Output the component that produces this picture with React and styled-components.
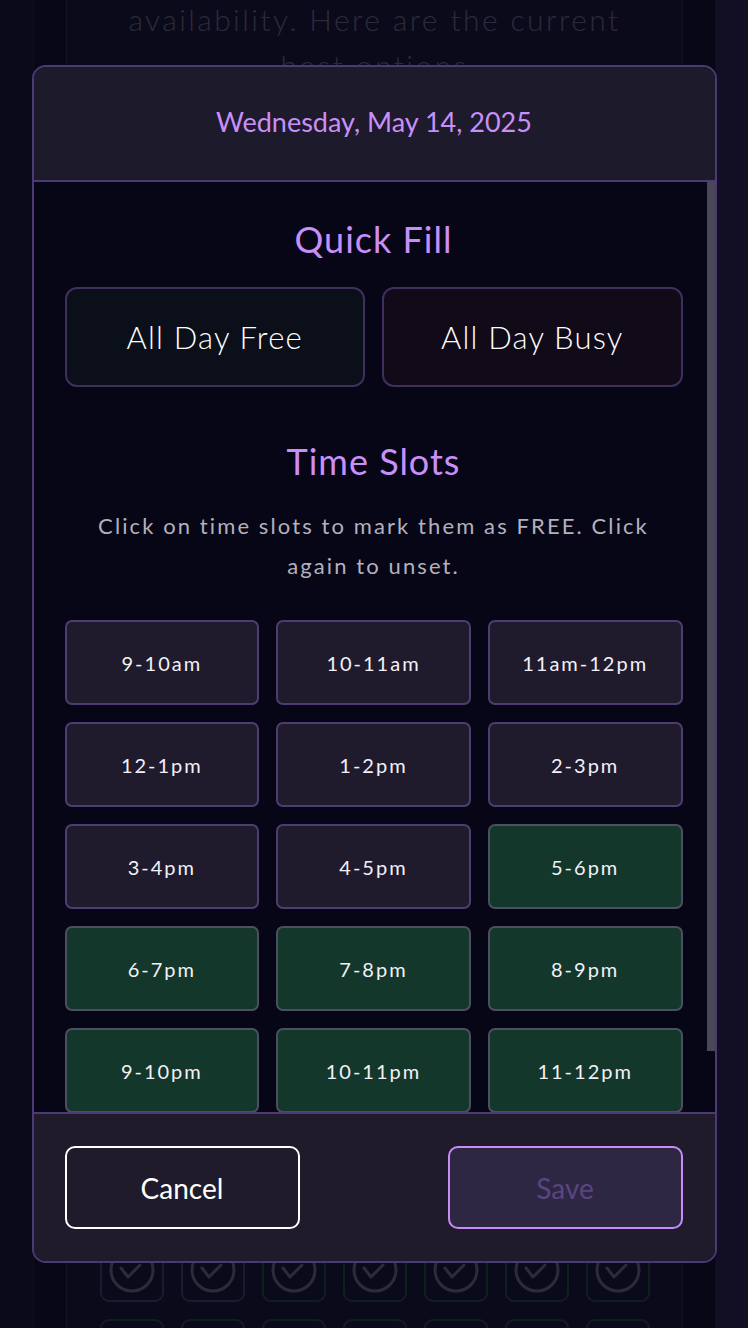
import styled, { createGlobalStyle } from "styled-components"

const GlobalStyle = createGlobalStyle`
    html, body {
        margin: 0;
        padding: 0;
        height: 1328px;
        overflow: hidden;
        background: #0b0a1b;
    }
    * {
        box-sizing: border-box;
    }
    body {
        font-family: Lato, "Open Sans", sans-serif;
    }
`

const slots = [
    { label: "9-10am", free: false },
    { label: "10-11am", free: false },
    { label: "11am-12pm", free: false },
    { label: "12-1pm", free: false },
    { label: "1-2pm", free: false },
    { label: "2-3pm", free: false },
    { label: "3-4pm", free: false },
    { label: "4-5pm", free: false },
    { label: "5-6pm", free: true },
    { label: "6-7pm", free: true },
    { label: "7-8pm", free: true },
    { label: "8-9pm", free: true },
    { label: "9-10pm", free: true },
    { label: "10-11pm", free: true },
    { label: "11-12pm", free: true },
]

// the page behind the modal, only the edges of it show
const backgroundChecks = [false, false, true, true, true, true, true, true, true, true, true, true, true, true, true, true, true, true, true, true, true]

// visible part of the scroll area vs full content height
const viewHeight = 930
const contentHeight = 995

function CheckCircle() {
    return (
        <svg width="48" height="48" viewBox="0 0 48 48" fill="none" stroke="#5a5676" strokeWidth="3" strokeLinecap="round" strokeLinejoin="round">
            <circle cx="24" cy="24" r="21" />
            <polyline points="13,22 20,31 32,19" />
        </svg>
    )
}

export default function App() {
    const thumb = Math.round((viewHeight * viewHeight) / contentHeight)

    return (
        <>
            <GlobalStyle />
            <Page>
                <Column>
                    <Card>
                        <Intro>availability. Here are the current best options</Intro>
                        <CheckGrid>
                            {backgroundChecks.map((free, i) => (
                                <CheckBox key={i} $free={free}>
                                    <CheckCircle />
                                </CheckBox>
                            ))}
                        </CheckGrid>
                    </Card>
                </Column>
            </Page>

            <Overlay>
                <Modal>
                    <Header>
                        <DateTitle>Wednesday, May 14, 2025</DateTitle>
                    </Header>
                    <BodyRow>
                        <Body>
                            <SectionTitle>Quick Fill</SectionTitle>
                            <QuickRow>
                                <QuickButton $tone="free">All Day Free</QuickButton>
                                <QuickButton $tone="busy">All Day Busy</QuickButton>
                            </QuickRow>
                            <SectionTitle $spaced>Time Slots</SectionTitle>
                            <Hint>Click on time slots to mark them as FREE. Click again to unset.</Hint>
                            <SlotGrid>
                                {slots.map((slot) => (
                                    <Slot key={slot.label} $free={slot.free}>{slot.label}</Slot>
                                ))}
                            </SlotGrid>
                        </Body>
                        <ScrollTrack>
                            <ScrollThumb style={{ height: thumb }} />
                        </ScrollTrack>
                    </BodyRow>
                    <Footer>
                        <CancelButton>Cancel</CancelButton>
                        <SaveButton disabled>Save</SaveButton>
                    </Footer>
                </Modal>
            </Overlay>
        </>
    )
}

const Page = styled.div`
    height: 1328px;
    overflow: hidden;
    background: linear-gradient(to right, #161436 0 50%, #241c48 50% 100%);
    padding-left: 33px;
    padding-right: 32px;
`

const Column = styled.div`
    height: 100%;
    background: #100e2c;
    border-left: 1px solid #221f42;
    border-right: 1px solid #221f42;
    padding: 0 32px;
`

const Card = styled.div`
    height: 100%;
    background: #161436;
    border-left: 1px solid #272448;
    border-right: 1px solid #272448;
    display: flex;
    flex-direction: column;
    align-items: center;
`

const Intro = styled.p`
    margin: -4px 0 0;
    width: 515px;
    text-align: center;
    font-size: 30px;
    font-weight: 300;
    line-height: 46px;
    letter-spacing: 2.4px;
    color: #585474;
`

const CheckGrid = styled.div`
    margin-top: 1150px;
    display: grid;
    grid-template-columns: repeat(7, 64px);
    gap: 17px;
`

const CheckBox = styled.div`
    width: 64px;
    height: 64px;
    border: 2px solid ${(p) => (p.$free ? "#1e3e3c" : "#383458")};
    border-radius: 9px;
    display: flex;
    align-items: center;
    justify-content: center;
`

const Overlay = styled.div`
    position: fixed;
    inset: 0;
    background: rgba(0, 0, 0, 0.5);
    display: flex;
    align-items: center;
    justify-content: center;
`

const Modal = styled.div`
    width: 685px;
    height: 1198px;
    background: #070617;
    border: 2px solid #4c3a75;
    border-radius: 14px;
    overflow: hidden;
    display: flex;
    flex-direction: column;
`

const Header = styled.div`
    flex: none;
    height: 115px;
    background: #1d1a2c;
    border-bottom: 2px solid #4c3a75;
    display: flex;
    align-items: center;
    justify-content: center;
    padding-bottom: 4px;
`

const DateTitle = styled.h2`
    margin: 0;
    font-size: 27px;
    font-weight: 400;
    color: #c98ff8;
`

const BodyRow = styled.div`
    flex: 1;
    min-height: 0;
    display: flex;
`

const Body = styled.div`
    flex: 1;
    overflow: hidden;
    padding: 35px 24px 64px 31px;
`

const ScrollTrack = styled.div`
    flex: none;
    width: 8px;
`

const ScrollThumb = styled.div`
    width: 100%;
    background: #4a4757;
`

const SectionTitle = styled.h3`
    margin: ${(p) => (p.$spaced ? "52px 0 0" : "0")};
    text-align: center;
    font-size: 36px;
    line-height: 44px;
    font-weight: 400;
    letter-spacing: 1px;
    color: #c98ff8;
`

const QuickRow = styled.div`
    margin-top: 26px;
    display: grid;
    grid-template-columns: 1fr 1fr;
    gap: 17px;
`

const QuickButton = styled.button`
    height: 100px;
    border-radius: 12px;
    border: 2px solid #3f2f5c;
    background: ${(p) => (p.$tone === "free" ? "#0b0f19" : "#110a19")};
    color: #ffffff;
    font-family: inherit;
    font-size: 31px;
    font-weight: 300;
    letter-spacing: 1.2px;
    cursor: pointer;
`

const Hint = styled.p`
    margin: 23px auto 0;
    max-width: 590px;
    text-align: center;
    font-size: 22px;
    line-height: 40px;
    letter-spacing: 2.1px;
    color: #b4b1bd;
`

const SlotGrid = styled.div`
    margin-top: 34px;
    display: grid;
    grid-template-columns: repeat(3, 1fr);
    gap: 17px;
`

const Slot = styled.button`
    height: 85px;
    border-radius: 7px;
    border: 2px solid ${(p) => (p.$free ? "#4c4f5e" : "#4d3d70")};
    background: ${(p) => (p.$free ? "#13372a" : "#1f1b2d")};
    color: #f3f0f7;
    font-family: inherit;
    font-size: 20px;
    letter-spacing: 2px;
    cursor: pointer;
`

const Footer = styled.div`
    flex: none;
    background: #1f1b2b;
    border-top: 2px solid #4c3a75;
    padding: 32px 32px 32px 31px;
    display: flex;
    justify-content: space-between;
`

const FooterButton = styled.button`
    width: 235px;
    height: 83px;
    border-radius: 10px;
    font-family: inherit;
    font-size: 28px;
`

const CancelButton = styled(FooterButton)`
    background: #1f1b2b;
    border: 2px solid #ffffff;
    color: #ffffff;
`

const SaveButton = styled(FooterButton)`
    background: #2e2744;
    border: 2px solid #c88cf6;
    color: #5a4582;
`
